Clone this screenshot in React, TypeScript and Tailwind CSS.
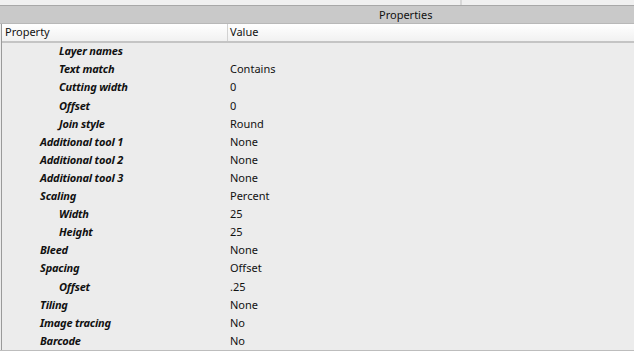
import React from 'react';

interface Row {
  name: string;
  value: string;
  level: 1 | 2;
}

const rows: Row[] = [
  { name: 'Layer names', value: '', level: 2 },
  { name: 'Text match', value: 'Contains', level: 2 },
  { name: 'Cutting width', value: '0', level: 2 },
  { name: 'Offset', value: '0', level: 2 },
  { name: 'Join style', value: 'Round', level: 2 },
  { name: 'Additional tool 1', value: 'None', level: 1 },
  { name: 'Additional tool 2', value: 'None', level: 1 },
  { name: 'Additional tool 3', value: 'None', level: 1 },
  { name: 'Scaling', value: 'Percent', level: 1 },
  { name: 'Width', value: '25', level: 2 },
  { name: 'Height', value: '25', level: 2 },
  { name: 'Bleed', value: 'None', level: 1 },
  { name: 'Spacing', value: 'Offset', level: 1 },
  { name: 'Offset', value: '.25', level: 2 },
  { name: 'Tiling', value: 'None', level: 1 },
  { name: 'Image tracing', value: 'No', level: 1 },
  { name: 'Barcode', value: 'No', level: 1 },
];

const App: React.FC = () => {
  return (
    <div
      className="w-[634px] h-[351px] overflow-hidden bg-[#ececec] text-[11px] text-[#111]"
      style={{ fontFamily: '"Noto Sans", "Open Sans", sans-serif' }}
    >
      {/* top strip */}
      <div className="flex h-[6px] border-b border-[#a8a8a8]">
        <div className="w-[460px] bg-[#f0f0f0]" />
        <div className="w-[2px] bg-[#d8d8d8]" />
        <div className="flex-1 bg-[#f0f0f0]" />
      </div>

      {/* title bar */}
      <div className="h-[18px] bg-[#c9c9c9] border-b border-[#b8b8b8] flex items-center">
        <span className="ml-[379px] leading-none">Properties</span>
      </div>

      <div className="border-l border-[#9a9a9a] ml-[1px] h-[326px] flex flex-col">
        {/* header */}
        <div className="h-[19px] flex border-b-2 border-[#c4c4c4] bg-gradient-to-b from-[#ffffff] to-[#f1f1f1]">
          <div className="w-[226px] border-r border-[#d2d2d2] pl-[3px] flex items-center">Property</div>
          <div className="flex-1 pl-[2px] flex items-center">Value</div>
        </div>

        {/* rows */}
        <div className="flex-1">
          {rows.map((r, i) => (
            <div key={i} className="h-[18.1px] flex items-center">
              <div
                className={`w-[227px] font-bold italic text-[11px] tracking-[-0.2px] ${r.level === 2 ? 'pl-[57px]' : 'pl-[38px]'}`}
              >
                {r.name}
              </div>
              <div className="flex-1 pl-[1px]">{r.value}</div>
            </div>
          ))}
        </div>
      </div>
      <div className="h-[1px] bg-[#bdbdbd]" />
    </div>
  );
};

export default App;
